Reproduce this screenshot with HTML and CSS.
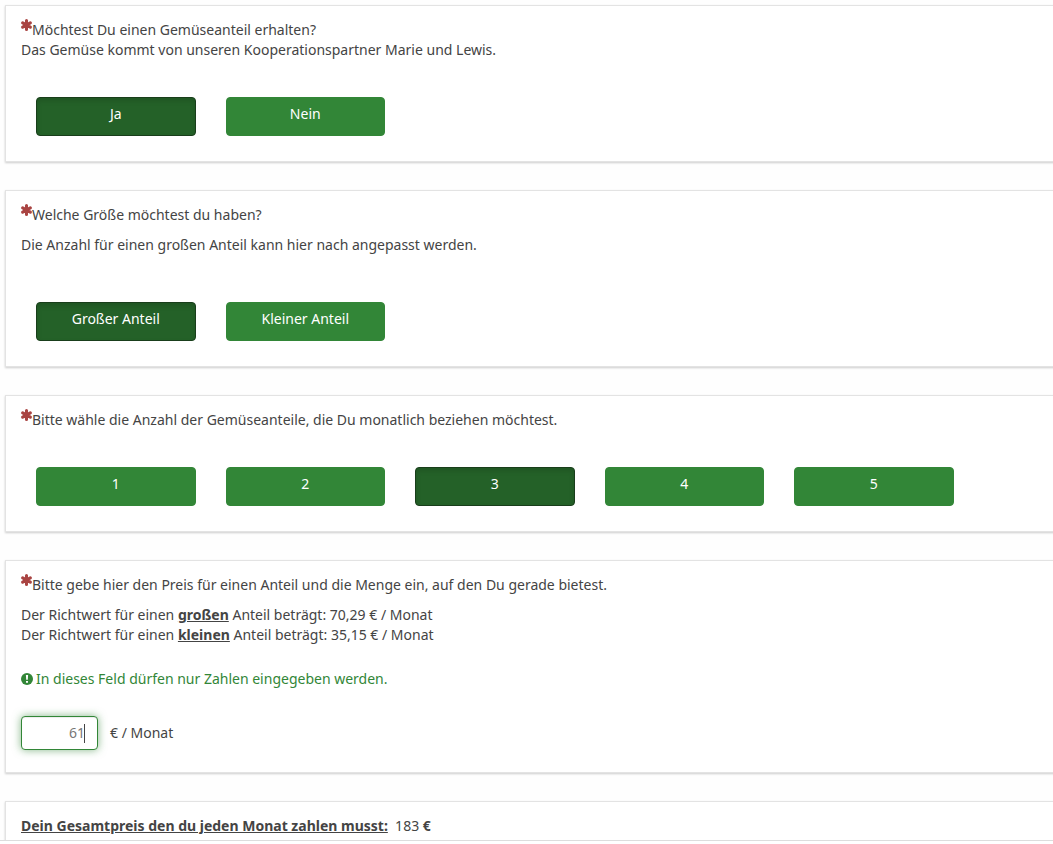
FILE: index.html
```html
<!DOCTYPE html>
<html lang="de">
<head>
  <meta charset="UTF-8">
  <meta name="viewport" content="width=device-width, initial-scale=1.0">
  <title>Gemüseanteil</title>
  <link rel="stylesheet" href="styles.css">
</head>

<body>
  <!-- Asterisk for mandatory questions -->
  <svg class="sprite" aria-hidden="true">
    <symbol id="asterisk" viewBox="0 0 10 11">
      <g stroke="currentColor" stroke-width="2.8" stroke-linecap="round">
        <path d="M5 1.400v8.200M1.500 3.500l7 4M8.500 3.500l-7 4"/>
      </g>
    </symbol>
  </svg>

  <main class="survey">
    <form class="container">
      <!-- Share yes / no -->
      <fieldset class="question">
        <div class="question-text">
          <p><svg class="required"><use href="#asterisk"/></svg>Möchtest Du einen Gemüseanteil erhalten?<br>Das Gemüse kommt von unseren Kooperationspartner Marie und Lewis.</p>
        </div>
        <div class="answers">
          <div class="answer"><input type="radio" name="share" id="shareYes" checked><label for="shareYes">Ja</label></div>
          <div class="answer"><input type="radio" name="share" id="shareNo"><label for="shareNo">Nein</label></div>
        </div>
      </fieldset>

      <!-- Size -->
      <fieldset class="question">
        <div class="question-text">
          <p><svg class="required"><use href="#asterisk"/></svg>Welche Größe möchtest du haben?</p>
          <p>Die Anzahl für einen großen Anteil kann hier nach angepasst werden.</p>
        </div>
        <div class="answers spaced">
          <div class="answer"><input type="radio" name="size" id="sizeBig" checked><label for="sizeBig">Großer Anteil</label></div>
          <div class="answer"><input type="radio" name="size" id="sizeSmall"><label for="sizeSmall">Kleiner Anteil</label></div>
        </div>
      </fieldset>

      <!-- Amount -->
      <fieldset class="question">
        <div class="question-text">
          <p><svg class="required"><use href="#asterisk"/></svg>Bitte wähle die Anzahl der Gemüseanteile, die Du monatlich beziehen möchtest.</p>
        </div>
        <div class="answers">
          <div class="answer"><input type="radio" name="amount" id="amount1"><label for="amount1">1</label></div>
          <div class="answer"><input type="radio" name="amount" id="amount2"><label for="amount2">2</label></div>
          <div class="answer"><input type="radio" name="amount" id="amount3" checked><label for="amount3">3</label></div>
          <div class="answer"><input type="radio" name="amount" id="amount4"><label for="amount4">4</label></div>
          <div class="answer"><input type="radio" name="amount" id="amount5"><label for="amount5">5</label></div>
        </div>
      </fieldset>

      <!-- Price -->
      <fieldset class="question question-price">
        <div class="question-text">
          <p><svg class="required"><use href="#asterisk"/></svg>Bitte gebe hier den Preis für einen Anteil und die Menge ein, auf den Du gerade bietest.</p>
          <p>Der Richtwert für einen <strong><u>großen</u></strong> Anteil beträgt: 70,29 € / Monat<br>Der Richtwert für einen <strong><u>kleinen</u></strong> Anteil beträgt: 35,15 € / Monat</p>
        </div>
        <div class="help">
          <svg viewBox="0 0 12 12" aria-hidden="true">
            <circle cx="6" cy="6" r="6" fill="currentColor"/>
            <path d="M4.900 2h2.200l-.3 4.800h-1.600zM5 7.900h2v1.900h-2z" fill="#fff"/>
          </svg>
          <span>In dieses Feld dürfen nur Zahlen eingegeben werden.</span>
        </div>
        <div class="price">
          <input type="text" id="price" class="active" value="61" inputmode="numeric">
          <label for="price">€ / Monat</label>
        </div>
      </fieldset>

      <!-- Total -->
      <div class="question">
        <p class="total"><strong><u>Dein Gesamtpreis den du jeden Monat zahlen musst:</u></strong>&nbsp; 183 <strong>€</strong></p>
      </div>
    </form>
  </main>
  <footer class="bottom-bar"></footer>
</body>
</html>
```
FILE: styles.css
```css
* 
{
  box-sizing: border-box;
}

body 
{
  display: flex;
  flex-direction: column;
  height: 100vh;
  margin: 0;
  overflow: hidden;
  background: #fefefe;
  color: #444;
  font-family: "Noto Sans", sans-serif;
  font-size: 14px;
  line-height: 20px;
}

.sprite 
{
  display: none;
}

.survey 
{
  flex: 1;
  min-height: 0;
  overflow: hidden;
  padding: 5px;
}

.container 
{
  display: flex;
  flex-direction: column;
  gap: 28px;
  min-width: 1169px;
}

/* Question Box */
.question 
{
  min-width: 0;
  margin: 0;
  padding: 14px 15px 25px;
  border: 1px solid #e3e3e3;
  background: #fff;
  box-shadow: 0 1px 2px rgba(0, 0, 0, 0.2);
}

.question-price 
{
  padding-bottom: 22px;
}

.question p 
{
  margin: 0 0 10px;
}

.question-text p:last-child 
{
  margin: 0;
}

.required 
{
  width: 11px;
  height: 12px;
  margin-top: -1px;
  vertical-align: 4px;
  color: #a94442;
}

/* Answer Buttons */
.answers 
{
  display: flex;
  margin-top: 37px;
}

.answers.spaced 
{
  margin-top: 47px;
}

.answer 
{
  position: relative;
  flex: 0 0 calc(100% / 6);
  padding: 0 15px;
}

.answer input 
{
  position: absolute;
  margin: 0;
  opacity: 0;
}

.answer label 
{
  display: block;
  height: 39px;
  padding: 6px 12px;
  border: 1px solid #328637;
  border-radius: 4px;
  background: #328637;
  color: #fff;
  text-align: center;
  cursor: pointer;
}

.answer input:checked + label 
{
  border-color: #193e1b;
  background: #246128;
  box-shadow: inset 0 3px 5px rgba(0, 0, 0, 0.125);
}

/* Price Input */
.help 
{
  display: flex;
  align-items: center;
  gap: 3px;
  margin-top: 24px;
  color: #328637;
}

.help svg 
{
  width: 12px;
  height: 12px;
}

.price 
{
  display: flex;
  align-items: center;
  gap: 12px;
  margin-top: 27px;
}

.price input 
{
  width: 77px;
  height: 34px;
  padding: 5px 12px 7px;
  border: 1px solid #ccc;
  border-radius: 4px;
  outline: 0;
  background: #fff;
  color: #777;
  font: inherit;
  text-align: right;
}

.price input.active 
{
  border-color: #328637;
  background: linear-gradient(#444, #444) right 12px center / 1px 19px no-repeat #fff;
  box-shadow: inset 0 1px 1px rgba(0, 0, 0, 0.075), 0 0 8px rgba(50, 134, 55, 0.6);
}

.bottom-bar 
{
  height: 4px;
  border-top: 1px solid #ddd;
  background: #fff;
}
```
